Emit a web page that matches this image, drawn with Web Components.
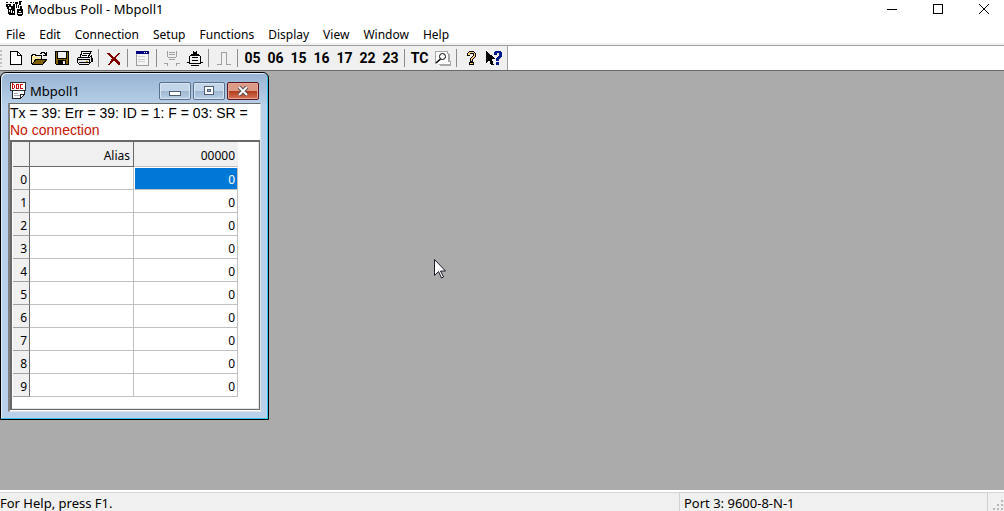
<!DOCTYPE html>
<html lang="en">
<head>
<meta charset="utf-8">
<title>Modbus Poll - Mbpoll1</title>
<style>
html, body { height: 100%; margin: 0; }
body { font: 12px/16px "Noto Sans", "Open Sans", sans-serif; color: #000; overflow: hidden; }
</style>
</head>
<body>
<app-window>
  <title-bar slot="title">Modbus Poll - Mbpoll1</title-bar>
  <menu-bar slot="menu"></menu-bar>
  <tool-bar slot="tools"></tool-bar>
  <child-window caption="Mbpoll1">
    <poll-status slot="status">
      <span>Tx = 39: Err = 39: ID = 1: F = 03: SR =</span>
      <span slot="error">No connection</span>
    </poll-status>
    <register-grid rows="10" column="00000"></register-grid>
  </child-window>
  <mouse-pointer></mouse-pointer>
  <status-bar slot="footer">For Help, press F1.<span slot="port">Port 3: 9600-8-N-1</span></status-bar>
</app-window>

<script>
const svg = (w, h, body) =>
  `<svg width="${w}" height="${h}" viewBox="0 0 ${w} ${h}" fill="none" shape-rendering="crispEdges" aria-hidden="true">${body}</svg>`;

const define = (name, render) => customElements.define(name, class extends HTMLElement {
  constructor() {
    super();
    this.attachShadow({ mode: 'open' });
  }
  connectedCallback() {
    this.shadowRoot.innerHTML =
      `<style>:host,*{box-sizing:border-box}svg{display:block;flex:none}
       button{font:inherit;color:inherit;border:0;background:none;padding:0;margin:0}</style>` + render(this);
  }
});

const icons = {
  app: svg(18, 16, `
    <path d="M0 3h5v3H0zM1 6h2v2H1zM2 8h3v5H2zM5 5h2v4H5zM6 8h3v6H6zM7 3h2v5H7zM3 12h4v2H3zM9 1h3v2H9zM10 3h1v4h-1zM13 0h3v1h-1v3h-2zM12 4h1v3h-1zM14 5h2v3h-2zM11 8h6v6h-1v1h-4v-1h-1z" fill="#000"/>
    <path d="M2 4h1v1H2zM3 9h1v2H3zM7 10h1v2H7zM13 10h2v1h-2zM12 12h4v1h-4z" fill="#fff"/><path d="M0 1h2v1H0zM4 1h2v1H4zM7 1h1v1H7z" fill="#000"/>`),
  New: svg(12, 14, `
    <path d="M.5.5h7l4 4v9H.5z" fill="#fff" stroke="#000"/><path d="M7.500.5v4h4" stroke="#000"/>`),
  Open: svg(16, 14, `
    <path d="M1 5h4l1 1h5v3H5l-4 4z" fill="#ffe9a6"/>
    <path d="M5 9h11l-4 4H1z" fill="#806000"/>
    <path d="M.5 13V4.500h1v-1h3v1h6V8M.5 13.500h11l4-5H5L1 13M9 2.500h1v-1h3v1h1v1M12 4.500h3V1" stroke="#000"/>`),
  Save: svg(14, 14, `
    <path d="M.5.5h13v13H1.500l-1-1z" fill="#806000" stroke="#000"/>
    <path d="M3 1h8v6H3z" fill="#f0f0f0"/><path d="M3 9h8v5H3z" fill="#000"/>
    <path d="M8 10h2v3H8z" fill="#f0f0f0"/><path d="M2.500 1v6.500h9V1" stroke="#000"/>`),
  Print: svg(16, 14, `
    <path d="M5 .5h9l-3 6H3z" fill="#fff" stroke="#000"/>
    <path d="M6 2.500h6M5 4.500h5" stroke="#000"/>
    <path d="M1.500 6.500h11l2-2v6l-3 3h-9l-2-2v-4z" fill="#e8e8e8" stroke="#000"/>
    <path d="M1 8.500h11M2 11.500h10M12.500 8v5M14 7h1.500v4" stroke="#000"/><path d="M9 10h2v1H9z" fill="#b09000"/>`),
  Delete: svg(14, 13, `
    <path d="M0 1h2l5 4 4-4h2l-4.500 5 4.500 5v2h-2L7 8l-4 5H1l4-6.500z" fill="#800000"/>`),
  Window: svg(13, 15, `
    <path d="M.5.5h12v14H.5z" fill="#f4f4f4" stroke="#9c9c9c"/><path d="M0 0h13v3H0z" fill="#000080"/>
    <path d="M8 1h1v1H8zM10 1h1v1h-1z" fill="#fff"/><path d="M2 5.500h7M2 8.500h7M2 10.500h7" stroke="#d0d0d0"/>`),
  Disconnect: svg(16, 15, `
    <path d="M3 0h1v6H3zM12 0h1v6h-1zM5 1h6v1H5zM5 3h6v1H5zM4 6h8v1H4zM5 8h6v1H5zM0 12h4v1H0zM3 13h1v2H3zM12 12h4v1h-4zM12 13h1v2h-1z" fill="#a0a0a0"/>`),
  Connect: svg(16, 15, `
    <path d="M6.500 0v3M9.500 0v3M4 3.500h8M3 4.500h10M2.500 5v7h11V5M5 6.500h6M5 9.500h6M3 12.500h10M0 11.500h3M13 11.500h3M4 14.500h8" stroke="#000"/>
    <path d="M6 1h4v2H6z" fill="#000"/>`),
  Pulse: svg(14, 13, `<path d="M0 12.500h4.500V.5h5v12H14" stroke="#a0a0a0"/>`),
  Traffic: svg(16, 15, `
    <path d="M1 0h12v1h1v10h2v4H4v-2H1z" fill="#fff"/>
    <path d="M.5 13V.5h12v2h1v8h2v3H4.500v-1" stroke="#a8a8a8"/><path d="M5 13.500h11M13.500 3v8" stroke="#a8a8a8" stroke-width="2"/>
    <g shape-rendering="auto"><circle cx="7.500" cy="5.500" r="3" stroke="#000"/><path d="M5.500 8 1 12" stroke="#000" stroke-width="1.500"/></g>`),
  Help: svg(11, 15, `
    <path d="M1 3V2h1V1h1V0h5v1h1v1h1v4H9v1H8v1H7v3H4V7h1V6h1V5h1V3H4v2H1zM3 11h5v3H3z" fill="#000"/>
    <path d="M2 4V2h1V1h5v1h1v4H8v1H7v1H6v2H5V7h1V6h1V5h1V2H4v2zM4 12h3v1H4z" fill="#ffd070"/>`),
  'Context help': svg(17, 15, `
    <path d="M0 0v12l3-3 2 5h3L6 8h4z" fill="#000"/>
    <path d="M8 3V1h1V0h6v1h1v5h-1v1h-1v1h-1v2h-3V7h1V6h1V5h1V2h-2v2H8zM10 11h3v3h-3z" fill="#001a8c"/>`),
  doc: svg(16, 17, `
    <path d="M2.500 5v11.500h8l4-4V5" fill="#fff" stroke="#222"/><path d="M10.500 16v-4h4" stroke="#222"/>
    <path d="M.5.5h15v8H.5z" fill="#fff" stroke="#333"/>
    <path d="M2.500 2v4.500h1l1-1v-2l-1-1zM6.500 2.500h2v4h-2zM13 2.500h-2.500v4H13" stroke="#d01010"/>
    <path d="M4 11.500h4M4 13.500h6" stroke="#aaa"/>`),
};

define('app-window', () => `
  <style>
    :host { display: flex; flex-direction: column; height: 100vh; background: #fff; }
    main { flex: 1; min-height: 0; position: relative; background: #ababab; border-top: 1px solid #696969; padding-top: 1px; overflow: hidden; }
  </style>
  <slot name="title"></slot><slot name="menu"></slot><slot name="tools"></slot>
  <main><slot></slot></main>
  <slot name="footer"></slot>`);

define('title-bar', () => `
  <style>
    :host { display: flex; align-items: center; height: 18px; padding-left: 6px; font-size: 13px; }
    .caption { margin-left: 3px; flex: 1; }
    button { width: 46px; height: 18px; display: grid; place-items: center; }
    .controls { display: flex; margin-right: -3px; }
  </style>
  ${icons.app}<span class="caption"><slot></slot></span>
  <div class="controls">
    <button aria-label="Minimize">${svg(10, 10, '<path d="M0 5.500h10" stroke="#000"/>')}</button>
    <button aria-label="Maximize">${svg(10, 10, '<path d="M.5.5h9v9h-9z" stroke="#000"/>')}</button>
    <button aria-label="Close">${svg(10, 10, '<path d="M0 0l10 10M10 0L0 10" stroke="#000" shape-rendering="auto"/>')}</button>
  </div>`);

define('menu-bar', () => `
  <style>
    :host { display: block; border-bottom: 2px solid #f0f0f0; }
    nav { display: flex; gap: 14px; padding: 9px 6px 0; }
  </style>
  <nav>${['File', 'Edit', 'Connection', 'Setup', 'Functions', 'Display', 'View', 'Window', 'Help']
    .map(t => `<button>${t}</button>`).join('')}</nav>`);

define('tool-bar', () => {
  const groups = [
    ['New', 'Open', 'Save', 'Print'], ['Delete'], ['Window'], ['Disconnect', 'Connect'], ['Pulse'],
    ['05', '06', '15', '16', '17', '22', '23'], ['TC', 'Traffic'], ['Help', 'Context help'],
  ];
  const button = n => icons[n] ? `<button aria-label="${n}">${icons[n]}</button>` : `<button>${n}</button>`;
  return `
  <style>
    :host { display: flex; height: 25px; border-top: 1px solid #a0a0a0; }
    .bar { display: flex; background: #f0f0f0; border-right: 1px solid #a0a0a0; padding-right: 1px; }
    .grip { width: 2px; margin: 4px 2px 3px 0; background: repeating-linear-gradient(#c0c0c0 0 2px, #f0f0f0 2px 4px); }
    .group { display: flex; }
    .group + .group::before { content: ""; width: 1px; margin: 3px 3px 3px 2px; background: #8c8c8c; }
    button { width: 23px; display: grid; place-items: center; font: bold 14px/16px Roboto, "Liberation Sans", sans-serif; }
  </style>
  <div class="bar" role="toolbar"><span class="grip"></span>
    ${groups.map(g => `<div class="group">${g.map(button).join('')}</div>`).join('')}
  </div>`;
});

define('child-window', el => `
  <style>
    :host {
      display: flex; flex-direction: column; width: 269px; height: 348px; padding: 0 7px 7px;
      border: 1px solid #000; border-radius: 6px 6px 0 0;
      background: linear-gradient(#98b4d2, #b9d1ea 34px 100%);
      box-shadow: inset -1px -1px #35c4e8, inset 1px 1px #e4eef8;
    }
    header { display: flex; align-items: center; gap: 2px; height: 30px; padding: 5px 2px 0; }
    .caption { flex: 1; margin-left: 2px; font-size: 13px; }
    button { width: 32px; height: 18px; border: 1px solid #5a6f8c; border-radius: 2px; display: grid; place-items: center;
      background: linear-gradient(#c3d5e8 50%, #9fb7d1 50%, #b8cfe6); box-shadow: inset 0 0 0 1px #d8e6f4; }
    .close { border-color: #5a1420; background: linear-gradient(#dc9a86 50%, #b43c18 50%, #cf7358); box-shadow: inset 0 0 0 1px #e6a795; }
    .client { flex: 1; min-height: 0; display: flex; flex-direction: column; background: #fff; padding: 0 0 1px;
      border: solid; border-width: 1px 1px 1px 2px; border-color: #696969 #e3e3e3 #e3e3e3 #808080; }
  </style>
  <header>${icons.doc}<span class="caption">${el.getAttribute('caption')}</span>
    <button aria-label="Minimize">${svg(12, 10, '<path d="M.5 5.500h11v4H.5z" fill="#fff" stroke="#4c5d74"/>')}</button>
    <button aria-label="Restore">${svg(12, 10, '<path d="M1.500.5h9v8h-9z" fill="#fff" stroke="#4c5d74"/><path d="M4.500 3.500h3v2h-3z" fill="#9fb7d1" stroke="#4c5d74"/>')}</button>
    <button class="close" aria-label="Close">${svg(12, 10, '<g shape-rendering="auto"><path d="M2 1l8 8M10 1L2 9" stroke="#5a4a52" stroke-width="4"/><path d="M2 1l8 8M10 1L2 9" stroke="#fff" stroke-width="2"/></g>')}</button>
  </header>
  <div class="client"><slot name="status"></slot><slot></slot></div>`);

define('poll-status', () => `
  <style>
    :host { display: block; height: 36px; padding-top: 1px; font: 14px/17px "Liberation Sans", Arial, sans-serif; white-space: nowrap; }
    div { height: 17px; }
    .error { color: #c81400; }
  </style>
  <div><slot></slot></div><div class="error"><slot name="error"></slot></div>`);

define('register-grid', el => `
  <style>
    :host { display: block; flex: 1; border: solid; border-width: 2px 1px 1px 2px; border-color: #696969; box-shadow: inset -1px -1px #e3e3e3; padding-left: 1px; }
    table { border-collapse: separate; border-spacing: 0; table-layout: fixed; width: 225px; text-align: right; }
    th, td { height: 23px; padding: 4px 2px 0 0; font-weight: 400; line-height: 16px; border: solid #c0c0c0; border-width: 0 1px 1px 0; }
    th { background: #f0f0f0; }
    thead th { height: 25px; border-color: #696969; padding: 4px 3px 0 0; }
    thead th:last-child { border-right-color: #f0f0f0; padding-right: 2px; border-bottom-color: #c0c0c0; }
    tbody th { border-right-color: #696969; border-bottom-color: #a0a0a0; }
    .index { width: 17px; } .alias { width: 104px; }
    .selected { background: #0078d7; background-clip: padding-box; color: #fff; border-color: #fff #c0c0c0 #c0c0c0 #fff; border-width: 1px; padding-top: 3px; }
  </style>
  <table>
    <thead><tr><th class="index" aria-label="Register"></th><th class="alias" scope="col">Alias</th><th scope="col">${el.getAttribute('column')}</th></tr></thead>
    <tbody>${Array.from({ length: +el.getAttribute('rows') }, (_, i) =>
      `<tr><th scope="row">${i}</th><td></td><td${i ? '' : ' class="selected"'}>0</td></tr>`).join('')}</tbody>
  </table>`);

define('mouse-pointer', () => `
  <style>:host { position: absolute; left: 434px; top: 188px; }</style>
  ${svg(12, 20, '<path d="M.5.5v16l4-4 3 6.500 2-1-3-6h5z" fill="#fff" stroke="#1a1a2a" shape-rendering="auto"/>')}`);

define('status-bar', () => `
  <style>
    :host { display: flex; height: 21px; background: #f0f0f0; border-top: 2px solid #fff; font-size: 13px; white-space: nowrap; }
    div { display: flex; align-items: center; border-top: 1px solid #d7d7d7; padding-top: 2px; }
    .help { flex: 1; }
    .port { width: 309px; padding-left: 4px; border: solid #d0d0d0; border-width: 1px 1px 0 1px; }
    .size { width: 16px; align-items: end; justify-content: end; }
  </style>
  <div class="help"><span><slot></slot></span></div>
  <div class="port"><slot name="port"></slot></div>
  <div class="size">${svg(11, 11, '<path d="M8 0h2v2H8zM4 4h2v2H4zM8 4h2v2H8zM0 8h2v2H0zM4 8h2v2H4zM8 8h2v2H8z" fill="#b8b8b8"/>')}</div>`);
</script>
</body>
</html>
